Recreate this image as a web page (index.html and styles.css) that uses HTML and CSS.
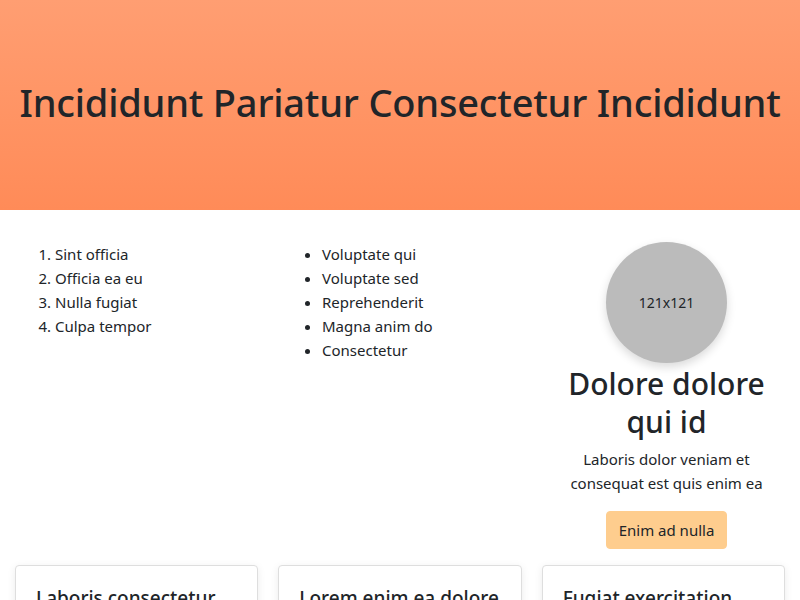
FILE: index.html
```html
<!DOCTYPE html>
<html>
<head>
<meta charset="utf-8">
<link rel="stylesheet" href="styles.css">
</head>
<body>
<header class="hero">
  <h1 class="hero-title">Incididunt Pariatur Consectetur Incididunt</h1>
</header>
<section class="top">
  <div class="col">
    <ol class="list">
      <li>Sint officia</li>
      <li>Officia ea eu</li>
      <li>Nulla fugiat</li>
      <li>Culpa tempor</li>
    </ol>
  </div>
  <div class="col">
    <ul class="list">
      <li>Voluptate qui</li>
      <li>Voluptate sed</li>
      <li>Reprehenderit</li>
      <li>Magna anim do</li>
      <li>Consectetur</li>
    </ul>
  </div>
  <div class="col profile">
    <div class="avatar">121x121</div>
    <h2 class="profile-title">Dolore dolore qui id</h2>
    <p class="profile-text">Laboris dolor veniam et consequat est quis enim ea</p>
    <button class="btn">Enim ad nulla</button>
  </div>
</section>
<section class="cards">
  <div class="card"><h5 class="card-title">Laboris consectetur</h5></div>
  <div class="card"><h5 class="card-title">Lorem enim ea dolore</h5></div>
  <div class="card"><h5 class="card-title">Fugiat exercitation</h5></div>
</section>
</body>
</html>
```
FILE: styles.css
```css
* { box-sizing: border-box; }
html, body { margin: 0; padding: 0; }
body {
  font-family: "Noto Sans", "Open Sans", sans-serif;
  font-size: 16px;
  line-height: 24px;
  color: #212529;
  background: #fff;
  overflow: hidden;
  height: 600px;
}
.hero {
  height: 210px;
  background: linear-gradient(to bottom, #ff9e72, #ff8b58);
  display: flex;
  align-items: center;
  justify-content: center;
  padding-bottom: 6px;
}
.hero-title {
  margin: 0;
  font-size: 38px;
  font-weight: 500;
  line-height: 48px;
  letter-spacing: -0.2px;
  white-space: nowrap;
}
.top {
  display: grid;
  grid-template-columns: 247px 246px 1fr;
  column-gap: 20px;
  padding: 32px 15px 0;
}
.list {
  margin: 0;
  padding-left: 40px;
  font-size: 15px;
}
.profile {
  display: flex;
  flex-direction: column;
  align-items: center;
  text-align: center;
}
.avatar {
  width: 121px;
  height: 121px;
  border-radius: 50%;
  background: #bbbbbb;
  box-shadow: 0 4px 10px rgba(0,0,0,0.15);
  display: flex;
  align-items: center;
  justify-content: center;
  font-size: 14px;
}
.profile-title {
  margin: 2px 0 6px;
  font-size: 30px;
  font-weight: 500;
  line-height: 38px;
}
.profile-text {
  margin: 0 0 16px;
  font-size: 15px;
}
.btn {
  font-family: inherit;
  font-size: 15px;
  line-height: 24px;
  color: #212529;
  background: #fecd8e;
  border: 1px solid #fecd8e;
  border-radius: 4px;
  padding: 6px 12px;
  white-space: nowrap;
}
.cards {
  display: grid;
  grid-template-columns: repeat(3, 1fr);
  column-gap: 20px;
  padding: 16px 15px 0;
}
.card {
  border: 1px solid #dedede;
  border-radius: 4px;
  box-shadow: 0 2px 8px rgba(0,0,0,0.08);
  padding: 20px 20px;
  height: 100px;
  background: #fff;
}
.card-title {
  margin: 0;
  font-size: 19px;
  font-weight: 500;
  line-height: 24px;
}
```
